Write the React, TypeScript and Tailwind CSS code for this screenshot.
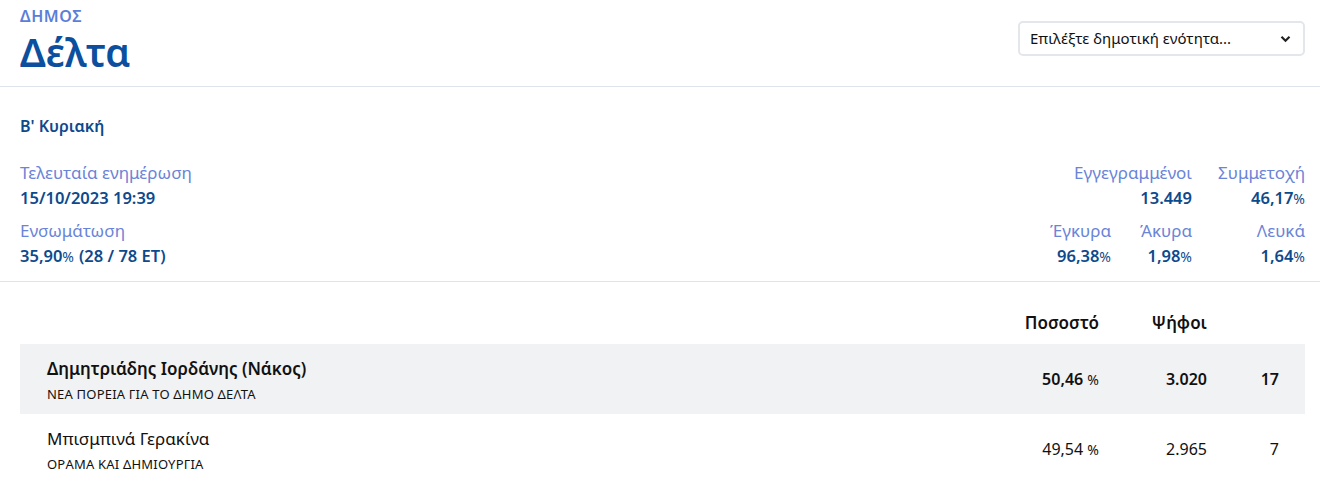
import React from 'react';

const font = { fontFamily: '"Noto Sans", "Open Sans", sans-serif' };

const Stat = ({ label, value, unit, extra, align = 'left', className = '' }: { label: string; value: string; unit?: string; extra?: string; align?: 'left' | 'right'; className?: string }) => (
  <div className={`${align === 'right' ? 'text-right' : 'text-left'} ${className}`}>
    <div className="text-[17px] leading-[25px] text-[#6a84d8]">{label}</div>
    <div className="h-[25px] text-[16.5px] leading-[25px] font-semibold text-[#0d4a8c] whitespace-nowrap">
      {value}
      {unit && <span className="text-[14px] font-normal">{unit}</span>}
      {extra && <span className="ml-[5px]">{extra}</span>}
    </div>
  </div>
);

const candidates = [
  { name: 'Δημητριάδης Ιορδάνης (Νάκος)', party: 'ΝΕΑ ΠΟΡΕΙΑ ΓΙΑ ΤΟ ΔΗΜΟ ΔΕΛΤΑ', pct: '50,46', votes: '3.020', seats: '17', winner: true },
  { name: 'Μπισμπινά Γερακίνα', party: 'ΟΡΑΜΑ ΚΑΙ ΔΗΜΙΟΥΡΓΙΑ', pct: '49,54', votes: '2.965', seats: '7', winner: false },
];

export default function App() {
  return (
    <div className="min-h-screen bg-white text-[#111]" style={font}>
      {/* header */}
      <header className="flex items-start justify-between pl-5 pr-[15px] pt-[6px] h-[87px] border-b border-[#dfe3ea]">
        <div>
          <div className="text-[16px] leading-[20px] font-semibold tracking-[0.6px] text-[#5b7ed8]">ΔΗΜΟΣ</div>
          <h1 className="text-[39px] leading-[46px] font-semibold text-[#0b4f9e] mt-[3px]">Δέλτα</h1>
        </div>
        <div className="mt-[15px] w-[287px] h-[35px] border-2 border-[#e3e6ea] rounded-[5px] flex items-center justify-between pl-[10px] pr-[12px]">
          <span className="text-[15px] text-[#111]">Επιλέξτε δημοτική ενότητα...</span>
          <svg width="11" height="8" viewBox="0 0 11 8" fill="none">
            <path d="M1.5 1.8 L5.5 5.8 L9.5 1.8" stroke="#222" strokeWidth="2.2" />
          </svg>
        </div>
      </header>

      {/* summary */}
      <section className="pl-5 pr-[15px] pt-[27px] pb-[13px] border-b border-[#dfe3ea]">
        <div className="text-[16px] leading-[24px] font-semibold text-[#0d4a8c]">Β' Κυριακή</div>
        <div className="flex justify-between mt-[22px]">
          <div className="flex flex-col gap-[8px]">
            <Stat label="Τελευταία ενημέρωση" value="15/10/2023 19:39" />
            <Stat label="Ενσωμάτωση" value="35,90" unit="%" extra="(28 / 78 ΕΤ)" />
          </div>
          <div className="flex flex-col gap-[8px]">
            <div className="flex justify-end gap-[26px]">
              <Stat label="Εγγεγραμμένοι" value="13.449" align="right" />
              <Stat label="Συμμετοχή" value="46,17" unit="%" align="right" className="w-[87px]" />
            </div>
            <div className="flex justify-end">
              <Stat label="Έγκυρα" value="96,38" unit="%" align="right" />
              <Stat label="Άκυρα" value="1,98" unit="%" align="right" className="w-[81px]" />
              <Stat label="Λευκά" value="1,64" unit="%" align="right" className="w-[113px]" />
            </div>
          </div>
        </div>
      </section>

      {/* results */}
      <section className="pl-5 pr-[15px] pt-[28px]">
        <div className="flex h-[34px] items-start text-[17px] font-semibold text-[#111]">
          <div className="flex-1" />
          <div className="w-[120px] text-right">Ποσοστό</div>
          <div className="w-[108px] text-right">Ψήφοι</div>
          <div className="w-[98px]" />
        </div>
        {candidates.map((c) => (
          <div key={c.name} className={`flex items-center h-[70px] pl-[27px] ${c.winner ? 'bg-[#f1f2f4]' : ''}`}>
            <div className="flex-1 pt-[3px]">
              <div className={`text-[17px] leading-[24px] ${c.winner ? 'font-semibold' : ''}`}>{c.name}</div>
              <div className="text-[13px] leading-[20px] mt-[3px] tracking-[0.2px]">{c.party}</div>
            </div>
            <div className={`w-[120px] text-right text-[16px] ${c.winner ? 'font-semibold' : ''}`}>
              {c.pct} <span className="text-[14px] font-normal">%</span>
            </div>
            <div className={`w-[108px] text-right text-[16px] ${c.winner ? 'font-semibold' : ''}`}>{c.votes}</div>
            <div className={`w-[72px] text-right text-[16px] ${c.winner ? 'font-semibold' : ''}`}>{c.seats}</div>
            <div className="w-[26px]" />
          </div>
        ))}
      </section>
    </div>
  );
}
